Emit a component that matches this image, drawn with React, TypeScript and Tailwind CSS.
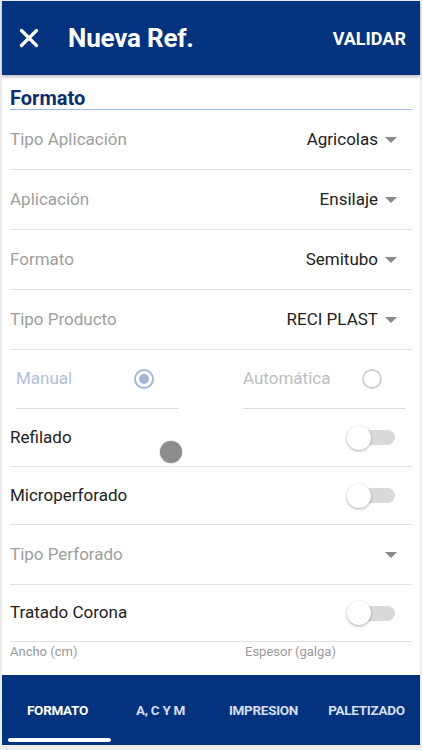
import { X } from 'lucide-react';

const selects = [
    { label: 'Tipo Aplicación', value: 'Agricolas' },
    { label: 'Aplicación', value: 'Ensilaje' },
    { label: 'Formato', value: 'Semitubo' },
    { label: 'Tipo Producto', value: 'RECI PLAST' },
];

function Caret() {
    return (
        <svg width="14" height="8" viewBox="0 0 14 8" className="ml-[6px]">
            <path d="M1 1 L13 1 L7 7 Z" fill="#8a8a8a" />
        </svg>
    );
}

function Toggle() {
    return (
        <div className="relative w-[48px] h-[24px] flex items-center">
            <div className="ml-[9px] w-[39px] h-[15px] rounded-full bg-[#dadada]" />
            <div className="absolute left-0 top-0 w-[24px] h-[24px] rounded-full bg-white shadow-[0_1px_3px_rgba(0,0,0,0.35)]" />
        </div>
    );
}

export default function App() {
    return (
        <div
            className="w-[422px] h-[750px] bg-[#ececec] px-[2px] pt-px pb-[5px] flex flex-col"
            style={{ fontFamily: 'Roboto, "Noto Sans", sans-serif' }}
        >
            <div className="h-[74px] bg-[#03337f] flex items-center pl-[12px] pr-[16px] shadow-[0_2px_3px_rgba(0,0,0,0.25)] z-10">
                <X className="w-[30px] h-[30px] text-white" strokeWidth={2.6} />
                <span className="ml-[24px] text-white text-[26px] font-bold tracking-[-0.2px]">Nueva Ref.</span>
                <span className="ml-auto mr-[-2px] text-white text-[18px] font-bold">VALIDAR</span>
            </div>

            <div className="relative flex-1 bg-white px-[8px] flex flex-col">
                <div className="pt-[13px] border-b border-[#9dbbec]">
                    <span className="block text-[20px] font-bold text-[#0b2f70] leading-[21px]">Formato</span>
                </div>

                {selects.map(s => (
                    <div key={s.label} className="h-[60px] flex items-center border-b border-[#e2e2e2] pr-[14px]">
                        <span className="text-[17px] text-[#9e9e9e]">{s.label}</span>
                        <span className="ml-auto text-[17px] text-[#222]">{s.value}</span>
                        <Caret />
                    </div>
                ))}

                <div className="h-[59px] flex gap-[64px] px-[6px]">
                    <div className="flex-1 flex items-center border-b border-[#dedede]">
                        <span className="text-[17px] text-[#b3c0d8]">Manual</span>
                        <div className="ml-[62px] w-[20px] h-[20px] rounded-full border-[2px] border-[#a3b6d8] flex items-center justify-center">
                            <div className="w-[10px] h-[10px] rounded-full bg-[#a3b6d8]" />
                        </div>
                    </div>
                    <div className="flex-1 flex items-center border-b border-[#dedede]">
                        <span className="text-[17px] text-[#bdbdbd]">Automática</span>
                        <div className="ml-auto mr-[24px] w-[20px] h-[20px] rounded-full border-[2px] border-[#cfcfcf]" />
                    </div>
                </div>

                {['Refilado', 'Microperforado'].map(l => (
                    <div key={l} className="h-[58px] flex items-center border-b border-[#e2e2e2] pr-[17px]">
                        <span className="text-[17px] text-[#222]">{l}</span>
                        <div className="ml-auto">
                            <Toggle />
                        </div>
                    </div>
                ))}

                <div className="h-[60px] flex items-center border-b border-[#e2e2e2] pr-[14px]">
                    <span className="text-[17px] text-[#9e9e9e]">Tipo Perforado</span>
                    <div className="ml-auto">
                        <Caret />
                    </div>
                </div>

                <div className="h-[57px] flex items-center border-b border-[#e2e2e2] pr-[17px]">
                    <span className="text-[17px] text-[#222]">Tratado Corona</span>
                    <div className="ml-auto">
                        <Toggle />
                    </div>
                </div>

                <div className="flex">
                    <span className="w-[235px] text-[13px] text-[#9a9a9a]">Ancho (cm)</span>
                    <span className="text-[13px] text-[#9a9a9a]">Espesor (galga)</span>
                </div>

                <div className="absolute left-[158px] top-[366px] w-[22px] h-[22px] rounded-full bg-[#8c8c8c] shadow-[0_0_2px_rgba(0,0,0,0.3)]" />
            </div>

            <div className="h-[70px] bg-[#03337f] flex pl-[4px] pr-[2px]">
                {['FORMATO', 'A, C Y M', 'IMPRESION', 'PALETIZADO'].map((t, i) => (
                    <div key={t} className="flex-1 relative flex items-center justify-center">
                        <span className={`text-[13.5px] font-bold tracking-[-0.3px] ${i === 0 ? 'text-white' : 'text-[#d6def0]'}`}>{t}</span>
                        {i === 0 && <div className="absolute left-[2px] right-[-2px] bottom-[3px] h-[4px] bg-white rounded-sm" />}
                    </div>
                ))}
            </div>
        </div>
    );
}
